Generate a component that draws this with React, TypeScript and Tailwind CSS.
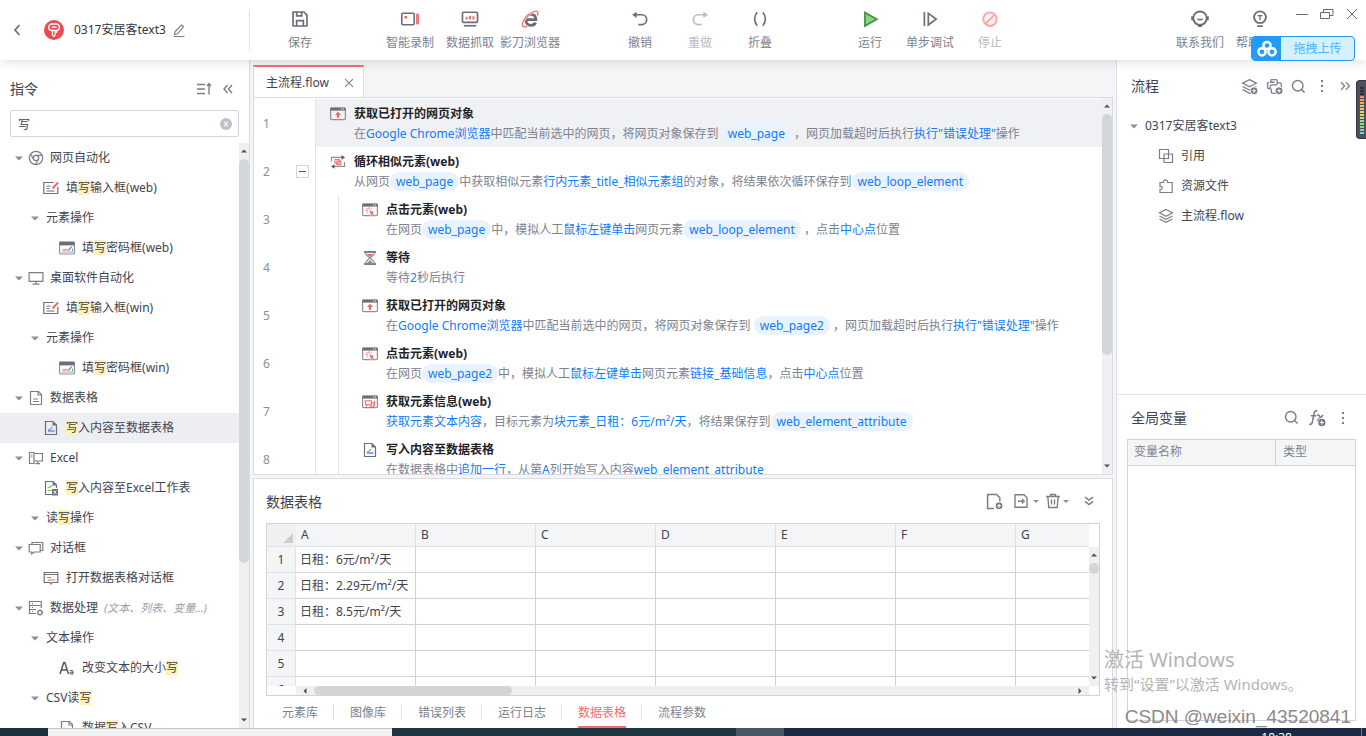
import { useState, type ReactNode } from "react";

type Part = string | { link: string } | { pill: string };

type Step = {
  icon: ReactNode;
  title: string;
  indent?: boolean;
  desc: Part[];
};

type TreeRow = {
  kind: "root" | "group" | "leaf" | "subleaf";
  label: string;
  icon?: ReactNode;
  note?: string;
};

/* ---------- icons ---------- */

function Icon({ children, size = 16, className = "" }: { children: ReactNode; size?: number; className?: string }) {
  return (
    <svg
      width={size}
      height={size}
      viewBox="0 0 16 16"
      fill="none"
      stroke="currentColor"
      strokeWidth="1.2"
      className={`shrink-0 ${className}`}
      aria-hidden="true"
    >
      {children}
    </svg>
  );
}

const windowFrame = (
  <>
    <rect x="0.6" y="2" width="14.8" height="11.6" rx="1" stroke="#8c8f99" />
    <path d="M0.5 1.6h15v3h-15z" fill="#6b6f7b" stroke="none" />
    <path d="M11 3h1M13 3h1" stroke="#fff" strokeWidth="1" />
  </>
);

const openPageIcon = (
  <Icon>
    {windowFrame}
    <path d="M8 5.8l3 3.2H9.2v2.8H6.8V9H5z" fill="#f56565" stroke="none" />
  </Icon>
);

const clickIcon = (
  <Icon>
    {windowFrame}
    <path d="M7 5.2v2M3.6 8.6h2M4.5 6.2l1.4 1.4M9.6 6.2L8.4 7.4M4.7 11.2l1.2-1.2" stroke="#f56565" strokeWidth="1" />
    <path d="M7.3 8l5.2 2.2-2 .8 2.3 2.3-1.2 1.2-2.2-2.3-.7 1.6z" fill="#f56565" stroke="#fff" strokeWidth="0.4" />
  </Icon>
);

const infoIcon = (
  <Icon>
    {windowFrame}
    <path d="M3.5 6.8h6v4h-6zM2.500 6.800h1M4.500 12.500v-2M9.500 9h2.500v3.800H8.500zM12.500 7v5" stroke="#f56565" strokeWidth="1" />
  </Icon>
);

const loopIcon = (
  <Icon>
    <path d="M1.500 7.500V3.400h11M14.500 8v4.400h-11" stroke="#8c8f99" />
    <path d="M11.500 1l3.600 2.400-3.600 2.300zM4.500 10.200L1 12.500l3.500 2.300z" fill="#55585f" stroke="none" />
    <rect x="5" y="5.400" width="4.200" height="3.600" stroke="#f56565" strokeWidth="1" />
    <rect x="6.800" y="7" width="4" height="3.600" stroke="#f56565" strokeWidth="1" />
  </Icon>
);

const waitIcon = (
  <Icon>
    <path d="M2 2h12M2 14h12" stroke="#55585f" strokeWidth="1.400" />
    <path d="M3.500 2.500c0 3 3 4 4.500 5.500 1.500-1.500 4.500-2.500 4.500-5.500M3.500 13.500c0-3 3-4 4.500-5.500 1.500 1.500 4.500 2.500 4.500 5.500" stroke="#8c8f99" />
    <path d="M4.800 4h6.400L8 7z" fill="#f56565" stroke="none" />
    <path d="M4.500 13.500L8 10l3.500 3.500z" fill="#8c8f99" stroke="none" />
  </Icon>
);

const sheetWriteIcon = (
  <Icon>
    <path d="M2.500 1.500h7.500l3.500 3.500v9.500h-11z" stroke="#6b6f7b" />
    <path d="M9.500 1.500v4h4z" fill="#6b6f7b" stroke="none" />
    <path d="M5 11h6.500" stroke="#7ea8f8" strokeWidth="2.200" />
    <path d="M4.800 10.200l1.500-.3 3-3" stroke="#6b6f7b" strokeWidth="1" />
  </Icon>
);

const inputIcon = (
  <Icon>
    <path d="M10.500 2.500H.8v11h14V7" stroke="#6b6f7b" />
    <path d="M3.500 6h4M3.500 8.500h3M3.500 11h8" stroke="#6b6f7b" strokeWidth="1" />
    <path d="M15 2.500L9.500 8.500" stroke="#f56565" strokeWidth="2" />
  </Icon>
);

const passwordIcon = (
  <Icon>
    <rect x="0.600" y="2" width="14.800" height="12" rx="1" stroke="#8c8f99" />
    <path d="M0.500 1.800h15v3.600h-15z" fill="#6b6f7b" stroke="none" />
    <path d="M2.500 12h11V8.500" stroke="#a3a5ad" strokeWidth="1" />
    <path d="M3.500 9.800h5" stroke="#f56565" strokeWidth="1.200" />
    <path d="M9.500 10.500l3-4" stroke="#6b6f7b" />
  </Icon>
);

const chromeIcon = (
  <Icon>
    <circle cx="8" cy="8" r="6.700" />
    <circle cx="8" cy="8" r="2.700" />
    <path d="M8 5.300h6M5.600 9.300L2.600 4.200M10.400 9.300l-3 5.200" />
  </Icon>
);

const monitorIcon = (
  <Icon>
    <path d="M1.100 2.600h13.800v8.800H1.100zM8 11.400V14M4.600 14.200h6.800" />
  </Icon>
);

const docIcon = (
  <Icon>
    <path d="M2.500 1.500h8l3 3v10h-11zM5 9h5M5 11.500h6" />
    <path d="M10 1.500V5h3.500" />
  </Icon>
);

const excelIcon = (
  <Icon>
    <path d="M6 13.500H1.500v-11H6zM6 3.500h8.500v7.500H6M9.800 11v2.500M7.500 13.700h4.500M3 5h1.500M3 7h1.500" />
  </Icon>
);

const excelWriteIcon = (
  <Icon>
    <path d="M13.500 8V5L10 1.500H2.500v13H9" stroke="#6b6f7b" />
    <path d="M9.500 1.500v4h4z" fill="#6b6f7b" stroke="none" />
    <path d="M4.500 8l1.500-.5 3-2M4.500 10.500h4" stroke="#67c23a" />
    <rect x="9" y="9" width="6" height="6.500" fill="#6b6f7b" stroke="none" />
    <path d="M10.600 10.600l2.800 3.300M13.400 10.600l-2.800 3.300" stroke="#fff" strokeWidth="1" />
  </Icon>
);

const dialogIcon = (
  <Icon>
    <path d="M1.200 4.500h11v7.500H6l-2.300 2v-2H1.200zM4 4.400V2.500h10.800v8h-2.400" />
  </Icon>
);

const tableDialogIcon = (
  <Icon>
    <path d="M1.200 2.500h13.600v10H9L8 14l-1-1.500H1.200zM1 4.500h14" stroke="#6b6f7b" />
    <path d="M4 7.500h4M5 10h7" stroke="#f56565" />
  </Icon>
);

const dataIcon = (
  <Icon>
    <path d="M8 13.500H1.500v-12h11.800V8M2 5.500h11M2 9.500h6M4 3.600h1M4 7.500h1M4 11.500h1" />
    <circle cx="12" cy="12.500" r="2.200" />
    <path d="M12 9.500v1M12 14.600v1M9 12.500h1M14 12.500h1.300M10 10.600l.6.500M13.500 14l.7.500M14.200 10.600l-.7.600M10.500 14l-.7.500" />
  </Icon>
);

const caseIcon = (
  <Icon>
    <path d="M1 14L4.800 2.500h1L9.500 14M2.500 10h5.500" stroke="#55585f" strokeWidth="1.500" />
    <path d="M11 10.500h2.200q.8 0 .8.900V14h-2q-1.200 0-1.200-.9t1.200-.9h2" stroke="#55585f" strokeWidth="1" />
  </Icon>
);

const layersPath = <path d="M8 1.500l6.500 3.300L8 8.200 1.500 4.800zM1.500 8L8 11.300 14.500 8M1.500 11L8 14.400l6.500-3.400" />;

const plusBadge = (
  <>
    <circle cx="12.300" cy="12" r="3.600" fill="#6b6f7b" stroke="#fff" strokeWidth="0.800" />
    <path d="M12.300 10v4M10.300 12h4" stroke="#fff" strokeWidth="1" />
  </>
);

const searchIcon = (
  <Icon size={15}>
    <circle cx="7.200" cy="7.200" r="5.600" strokeWidth="1.500" />
    <path d="M11.500 11.500l3 3" strokeWidth="1.600" />
  </Icon>
);

const moreIcon = (
  <Icon>
    <path d="M8 2v2M8 7v2M8 12v2" strokeWidth="2" />
  </Icon>
);

/* ---------- data ---------- */

const tree: TreeRow[] = [
  { kind: "root", label: "网页自动化", icon: chromeIcon },
  { kind: "leaf", label: "填写输入框(web)", icon: inputIcon },
  { kind: "group", label: "元素操作" },
  { kind: "subleaf", label: "填写密码框(web)", icon: passwordIcon },
  { kind: "root", label: "桌面软件自动化", icon: monitorIcon },
  { kind: "leaf", label: "填写输入框(win)", icon: inputIcon },
  { kind: "group", label: "元素操作" },
  { kind: "subleaf", label: "填写密码框(win)", icon: passwordIcon },
  { kind: "root", label: "数据表格", icon: docIcon },
  { kind: "leaf", label: "写入内容至数据表格", icon: sheetWriteIcon },
  { kind: "root", label: "Excel", icon: excelIcon },
  { kind: "leaf", label: "写入内容至Excel工作表", icon: excelWriteIcon },
  { kind: "group", label: "读写操作" },
  { kind: "root", label: "对话框", icon: dialogIcon },
  { kind: "leaf", label: "打开数据表格对话框", icon: tableDialogIcon },
  { kind: "root", label: "数据处理", icon: dataIcon, note: "(文本、列表、变量...)" },
  { kind: "group", label: "文本操作" },
  { kind: "subleaf", label: "改变文本的大小写", icon: caseIcon },
  { kind: "group", label: "CSV读写" },
  { kind: "subleaf", label: "数据写入CSV", icon: docIcon },
];

const steps: Step[] = [
  {
    icon: openPageIcon,
    title: "获取已打开的网页对象",
    desc: [
      "在", { link: "Google Chrome浏览器" }, "中匹配当前选中的网页，将网页对象保存到 ", { pill: "web_page" },
      " ，网页加载超时后执行", { link: "执行\"错误处理\"" }, "操作",
    ],
  },
  {
    icon: loopIcon,
    title: "循环相似元素(web)",
    desc: [
      "从网页", { pill: "web_page" }, "中获取相似元素", { link: "行内元素_title_相似元素组" },
      "的对象，将结果依次循环保存到", { pill: "web_loop_element" },
    ],
  },
  {
    icon: clickIcon,
    title: "点击元素(web)",
    indent: true,
    desc: [
      "在网页", { pill: "web_page" }, "中，模拟人工", { link: "鼠标左键单击" }, "网页元素",
      { pill: "web_loop_element" }, " ，点击", { link: "中心点" }, "位置",
    ],
  },
  {
    icon: waitIcon,
    title: "等待",
    indent: true,
    desc: ["等待", { link: "2" }, "秒后执行"],
  },
  {
    icon: openPageIcon,
    title: "获取已打开的网页对象",
    indent: true,
    desc: [
      "在", { link: "Google Chrome浏览器" }, "中匹配当前选中的网页，将网页对象保存到 ", { pill: "web_page2" },
      " ，网页加载超时后执行", { link: "执行\"错误处理\"" }, "操作",
    ],
  },
  {
    icon: clickIcon,
    title: "点击元素(web)",
    indent: true,
    desc: [
      "在网页", { pill: "web_page2" }, "中，模拟人工", { link: "鼠标左键单击" }, "网页元素",
      { link: "链接_基础信息" }, "，点击", { link: "中心点" }, "位置",
    ],
  },
  {
    icon: infoIcon,
    title: "获取元素信息(web)",
    indent: true,
    desc: [
      { link: "获取元素文本内容" }, "，目标元素为", { link: "块元素_日租：6元/m²/天" }, "，将结果保存到",
      { pill: "web_element_attribute" },
    ],
  },
  {
    icon: sheetWriteIcon,
    title: "写入内容至数据表格",
    indent: true,
    desc: [
      "在数据表格中", { link: "追加一行" }, "，从第", { link: "A" }, "列开始写入内容", { link: "web_element_attribute" },
    ],
  },
];

const columns = ["A", "B", "C", "D", "E", "F", "G"];
const cells = ["日租：6元/m²/天", "日租：2.29元/m²/天", "日租：8.5元/m²/天", "", "", ""];
const bottomTabs = ["元素库", "图像库", "错误列表", "运行日志", "数据表格", "流程参数"];

/* ---------- small parts ---------- */

function Caret({ className = "" }: { className?: string }) {
  return (
    <svg width="8" height="5" viewBox="0 0 8 5" className={`shrink-0 ${className}`} aria-hidden="true">
      <path d="M0 0.500h8L4 4.500z" fill="#8c8f99" />
    </svg>
  );
}

function ScrollArrow({ dir }: { dir: "up" | "down" | "left" | "right" }) {
  const d = {
    up: "M2 6.500h6L5 3.500z",
    down: "M2 3.500h6L5 6.500z",
    left: "M6.500 2v6L3.500 5z",
    right: "M3.500 2v6L6.500 5z",
  }[dir];
  return (
    <svg width="10" height="10" viewBox="0 0 10 10" className="shrink-0" aria-hidden="true">
      <path d={d} fill="#505050" />
    </svg>
  );
}

function VScroll({ thumb }: { thumb: string }) {
  return (
    <div className="flex w-[10px] shrink-0 flex-col items-center justify-between bg-[#f0f0f0] py-[3px]">
      <ScrollArrow dir="up" />
      <div className="min-h-0 w-full flex-1 py-[3px]">
        <div className={`w-full rounded-full bg-[#d2d6d9] ${thumb}`} />
      </div>
      <ScrollArrow dir="down" />
    </div>
  );
}

function ToolButton({ label, children, disabled }: { label: string; children: ReactNode; disabled?: boolean }) {
  return (
    <button
      disabled={disabled}
      className={`flex w-[60px] flex-col items-center gap-[5px] whitespace-nowrap pt-[3px] leading-[20px] ${
        disabled ? "text-[#b9bbc1]" : "text-[#7c828e]"
      }`}
    >
      {children}
      {label}
    </button>
  );
}

function IconButton({ label, children }: { label: string; children: ReactNode }) {
  return (
    <button aria-label={label} className="flex items-center text-[#7b7e89]">
      {children}
    </button>
  );
}

function Highlighted({ text, query }: { text: string; query: string }) {
  if (!query) return <>{text}</>;
  return (
    <>
      {text.split(query).map((piece, i) => (
        <span key={i}>
          {i > 0 && <mark className="inline-block bg-[#fff1b8] leading-[15px] text-inherit">{query}</mark>}
          {piece}
        </span>
      ))}
    </>
  );
}

function StepDesc({ parts }: { parts: Part[] }) {
  return (
    <p className="whitespace-pre leading-[20px] text-[#7c828e]">
      {parts.map((p, i) => {
        if (typeof p === "string") return <span key={i}>{p}</span>;
        if ("link" in p) return <span key={i} className="text-[#0f7bff]">{p.link}</span>;
        return (
          <span key={i} className="inline-block rounded-full bg-[#e9f2ff] px-[6px] leading-[19px] text-[#0f7bff]">
            {p.pill}
          </span>
        );
      })}
    </p>
  );
}

/* ---------- sections ---------- */

function Header() {
  return (
    <header className="relative z-10 flex h-[60px] shrink-0 items-center bg-white shadow-[0_2px_10px_rgba(0,0,0,0.12)]">
      <div className="flex h-10 w-[250px] shrink-0 items-center border-r border-[#dfe1e6] pl-[10px]">
        <button aria-label="返回" className="text-[#6b6f7b]">
          <Icon><path d="M9.500 3L5 8l4.500 5" strokeWidth="1.800" /></Icon>
        </button>
        <svg width="20" height="20" viewBox="0 0 20 20" fill="none" className="ml-[18px]" aria-hidden="true">
          <circle cx="10" cy="10" r="10" fill="#ec4b4f" />
          <rect x="4.700" y="4" width="10.600" height="6.500" rx="3" stroke="#fff" strokeWidth="1.300" />
          <path d="M7.500 7.200h5" stroke="#fff" strokeWidth="1.500" />
          <path d="M8.500 10.500v4.500l1.500 1.500 1.200-1.500v-4.500M12.800 11v2" stroke="#fff" strokeWidth="1.200" />
        </svg>
        <span className="ml-[10px] text-[#33363f]">0317安居客text3</span>
        <button aria-label="重命名" className="ml-[5px] text-[#7b7e89]">
          <Icon><path d="M10.500 3l2 1.800-6 7-3 .7.600-3zM2.500 14.500h11" strokeWidth="1.100" /></Icon>
        </button>
      </div>
      <div className="flex flex-1 items-center pl-[20px]">
        <ToolButton label="保存">
          <Icon size={18}>
            <path d="M1.800 1.800h9.700l2.700 2.700v9.700H1.800zM5 14v-4.500h6V14M5 2v3.300h4.500V2" stroke="#6b6f7b" strokeWidth="1.500" />
          </Icon>
        </ToolButton>
        <div className="ml-[50px] flex">
          <ToolButton label="智能录制">
            <svg width="20" height="18" viewBox="0 0 20 18" fill="none" aria-hidden="true">
              <rect x="1.800" y="3.300" width="12.400" height="11.400" rx="1" stroke="#6b6f7b" strokeWidth="1.600" />
              <rect x="4.500" y="6" width="2.500" height="2.500" fill="#f56565" />
              <rect x="16" y="3.500" width="3" height="11" rx="1" fill="#f97474" />
            </svg>
          </ToolButton>
          <ToolButton label="数据抓取">
            <Icon size={18}>
              <rect x="1.300" y="2" width="13.400" height="9" rx="1" stroke="#6b6f7b" strokeWidth="1.500" />
              <path d="M2.500 14h11" stroke="#6b6f7b" strokeWidth="1.500" />
              <path d="M5 6v2.500M8 5v3.500M11 5.500v3" stroke="#f56565" strokeWidth="1.700" />
            </Icon>
          </ToolButton>
          <ToolButton label="影刀浏览器">
            <Icon size={18}>
              <path d="M4.500 8.600h8.700c0-3.200-1.600-4.700-4.200-4.700S4.400 5.900 4.400 8.900c0 2.900 1.800 4.700 4.500 4.700 2 0 3.400-.7 4.100-2.400" stroke="#6b6f7b" strokeWidth="2.500" />
              <path d="M14.500 5c1-2.400.6-4-.9-4C10 1 4 6 1.800 10.700c-1 2.500-.6 4.500 1 4.500 1 0 2-.6 3-1.300" stroke="#fff" strokeWidth="2" />
              <path d="M14.500 5c1-2.400.6-4-.9-4C10 1 4 6 1.800 10.700c-1 2.500-.6 4.500 1 4.500 1 0 2-.6 3-1.300" stroke="#f97474" strokeWidth="1.300" />
            </Icon>
          </ToolButton>
        </div>
        <div className="ml-[50px] flex">
          <ToolButton label="撤销">
            <Icon size={18}>
              <path d="M3 4.200h6.500a4.400 4.400 0 010 8.800H6.500" stroke="#6b6f7b" strokeWidth="1.500" />
              <path d="M5 1.500L1 4.200 5 7z" fill="#6b6f7b" stroke="none" />
            </Icon>
          </ToolButton>
          <ToolButton label="重做" disabled>
            <Icon size={18}>
              <path d="M13 4.200H6.500a4.400 4.400 0 000 8.800h3" strokeWidth="1.500" />
              <path d="M11 1.500l4 2.700L11 7z" fill="currentColor" stroke="none" />
            </Icon>
          </ToolButton>
          <ToolButton label="折叠">
            <Icon size={18}>
              <path d="M5.500 2C2.500 5.500 2.500 10.500 5.500 14M10.500 2c3 3.500 3 8.500 0 12" stroke="#6b6f7b" strokeWidth="1.500" />
            </Icon>
          </ToolButton>
        </div>
        <div className="ml-[50px] flex">
          <ToolButton label="运行">
            <Icon size={18}>
              <path d="M3.500 2.200l10.500 6-10.500 6z" fill="#8bd67f" stroke="#3f8f46" strokeWidth="1.500" />
            </Icon>
          </ToolButton>
          <ToolButton label="单步调试">
            <Icon size={18}>
              <path d="M3 1.800v12.500M6.500 3l7 5-7 5.300z" stroke="#6b6f7b" strokeWidth="1.500" />
            </Icon>
          </ToolButton>
          <ToolButton label="停止" disabled>
            <Icon size={18}>
              <circle cx="8" cy="8.200" r="6" fill="#fff0f0" stroke="#ffa3a3" strokeWidth="1.600" />
              <path d="M4 12.200l8-8" stroke="#ffa3a3" strokeWidth="1.600" />
            </Icon>
          </ToolButton>
        </div>
        <div className="ml-auto mr-[76px] flex">
          <ToolButton label="联系我们">
            <Icon size={18}>
              <circle cx="8" cy="7.300" r="6" stroke="#6b6f7b" strokeWidth="1.700" />
              <path d="M1 5.500v3.600M15 5.500v3.600M6.300 14.200h3.400" stroke="#6b6f7b" strokeWidth="1.600" />
              <path d="M5.800 7.800c1 1.300 3.400 1.300 4.400 0" stroke="#6b6f7b" />
            </Icon>
          </ToolButton>
          <ToolButton label="帮助中心">
            <Icon size={18}>
              <path d="M6 11.500C3.500 10 2.700 8.500 2.700 6.500a5.300 5.300 0 0110.600 0c0 2-.8 3.500-3.300 5zM5.500 14.300h5" stroke="#6b6f7b" strokeWidth="1.600" />
              <path d="M5.800 5h4.400M8 5v4" stroke="#6b6f7b" strokeWidth="1.200" />
            </Icon>
          </ToolButton>
        </div>
      </div>

      {/* window controls */}
      <div className="absolute right-[6px] top-[6px] flex items-center gap-[9px] text-[#6b6b6b]">
        <button aria-label="最小化"><Icon><path d="M2 8.500h12" strokeWidth="1" /></Icon></button>
        <button aria-label="还原"><Icon><path d="M1.500 6.500h9v6h-9zM4.500 6.500v-3h9.500v6h-3.500" strokeWidth="1" /></Icon></button>
        <button aria-label="关闭"><Icon><path d="M3 3l10 10M13 3L3 13" strokeWidth="1" /></Icon></button>
      </div>

      {/* cloud drive drop target */}
      <button className="absolute right-[11px] top-[36px] flex h-[25px] w-[104px] items-center overflow-hidden rounded-[4px] border border-[#2196f3] bg-[#d4f1ff] text-[#4db2f7]">
        <span className="flex h-full w-[29px] items-center justify-center bg-[#219cf9]">
          <svg width="20" height="18" viewBox="0 0 20 18" fill="none" stroke="#fff" strokeWidth="2.500" aria-hidden="true">
            <circle cx="10" cy="5.500" r="3.600" />
            <circle cx="5" cy="11.800" r="3.600" />
            <circle cx="15" cy="11.800" r="3.600" />
          </svg>
        </span>
        <span className="flex-1">拖拽上传</span>
      </button>
    </header>
  );
}

function CommandPanel() {
  const [query, setQuery] = useState("写");
  const [active, setActive] = useState(9);

  const pad = {
    root: "pl-[15px]",
    group: "pl-[31px]",
    leaf: "pl-[43px]",
    subleaf: "pl-[59px]",
  };

  return (
    <aside className="flex w-[250px] shrink-0 flex-col border-r border-[#d9dce3] bg-white">
      <div className="flex items-center pl-[10px] pr-[13px] pt-[18px]">
        <h2 className="flex-1 text-[14px] leading-[22px]">指令</h2>
        <div className="flex items-center gap-[8px]">
          <IconButton label="排序">
            <Icon><path d="M1 3.500h8M1 8h8M1 12.500h8M13 13.500V3M11 5l2-2.500L15 5" strokeWidth="1.400" /></Icon>
          </IconButton>
          <IconButton label="收起">
            <Icon><path d="M7.500 4L4 8l3.500 4M12 4L8.500 8l3.500 4" strokeWidth="1.400" /></Icon>
          </IconButton>
        </div>
      </div>
      <div className="mx-[10px] mt-[10px] flex h-[27px] items-center rounded-[2px] border border-[#d3d5da] pl-[7px] pr-[6px]">
        <input
          aria-label="搜索指令"
          value={query}
          onChange={(e) => setQuery(e.target.value)}
          className="h-full min-w-0 flex-1 outline-none"
        />
        <button aria-label="清空" onClick={() => setQuery("")}>
          <svg width="12" height="12" viewBox="0 0 12 12" aria-hidden="true">
            <circle cx="6" cy="6" r="6" fill="#bfc1ca" />
            <path d="M4 3.500l4 5M8 3.500l-4 5" stroke="#fff" strokeWidth="1.200" />
          </svg>
        </button>
      </div>
      <div className="mt-[6px] flex min-h-0 flex-1">
        <div className="min-w-0 flex-1 overflow-hidden">
          {tree.map((row, i) => (
            <button
              key={i}
              onClick={() => setActive(i)}
              className={`flex h-[30px] w-full items-center whitespace-nowrap text-left ${pad[row.kind]} ${
                active === i ? "bg-[#edeef2]" : ""
              }`}
            >
              {(row.kind === "root" || row.kind === "group") && <Caret className="mr-[5px]" />}
              {row.icon && (
                <span className={`text-[#7b7e89] ${row.kind === "root" ? "mr-[6px]" : "mr-[7px]"}`}>{row.icon}</span>
              )}
              <span className={row.kind === "group" ? "pl-[2px]" : ""}>
                <Highlighted text={row.label} query={query} />
              </span>
              {row.note && <em className="ml-[6px] text-[11px] text-[#9a9da6]">{row.note}</em>}
            </button>
          ))}
        </div>
        <VScroll thumb="h-[73%]" />
      </div>
    </aside>
  );
}

function FlowEditor() {
  const [selected, setSelected] = useState(0);
  return (
    <section className="flex min-h-0 flex-1 flex-col">
      <div className="flex shrink-0">
        <div className="-mb-[1px] flex h-[33px] items-center gap-[13px] border-x border-t-2 border-x-[#d9dce3] border-t-[#f56c6c] bg-white pl-[12px] pr-[7px]">
          <button>主流程.flow</button>
          <button aria-label="关闭标签" className="text-[#7b7e89]">
            <Icon size={14}><path d="M3.500 3.500l9 9M12.500 3.500l-9 9" /></Icon>
          </button>
        </div>
      </div>
      <div className="flex min-h-0 flex-1 border border-[#d9dce3] bg-white">
        <ol className="min-w-0 flex-1 overflow-hidden pt-[1px]">
          {steps.map((step, i) => (
            <li key={i} className="flex h-[48px]" onClick={() => setSelected(i)}>
              <div className="flex w-[62px] shrink-0 items-center justify-between border-r border-[#e3e4e8] pl-[9px] pr-[6px] pt-[2px] text-[#8b8f99]">
                {i + 1}
                {i === 1 && (
                  <button aria-label="折叠循环" className="-mt-[2px] flex h-[13px] w-[13px] items-center justify-center border border-[#d3d5da]">
                    <span className="h-[1px] w-[7px] bg-[#55585f]" />
                  </button>
                )}
              </div>
              {step.indent && <div className="ml-[22px] mr-[9px] w-[1px] shrink-0 bg-[#e3e4e8]" />}
              <div
                className={`flex min-w-0 flex-1 gap-[8px] overflow-hidden pl-[14px] pt-[5px] ${
                  selected === i ? "bg-[#f0f1f5]" : ""
                }`}
              >
                <span className="pt-[2px]">{step.icon}</span>
                <div>
                  <h3 className="font-bold leading-[20px] text-[#1f2329]">{step.title}</h3>
                  <StepDesc parts={step.desc} />
                </div>
              </div>
            </li>
          ))}
        </ol>
        <VScroll thumb="h-[70%]" />
      </div>
    </section>
  );
}

function DataPanel() {
  const [tab, setTab] = useState("数据表格");
  return (
    <section className="mt-[3px] flex h-[250px] shrink-0 flex-col border border-b-0 border-[#d9dce3] bg-white px-[12px]">
      <div className="flex h-[44px] shrink-0 items-center">
        <h2 className="flex-1 text-[14px]">数据表格</h2>
        <div className="flex items-center pr-[4px]">
          <IconButton label="新增">
            <Icon size={17}><path d="M7.500 14.500h-6v-13h8.500l3 3V8" strokeWidth="1.400" />{plusBadge}</Icon>
          </IconButton>
          <span className="w-[10px]" />
          <IconButton label="导出">
            <Icon><path d="M2 1.800h9l3 3v9.400H2zM5 8.200h5M9 6l2.200 2.200L9 10.400" strokeWidth="1.400" /></Icon>
            <Caret className="ml-[3px] scale-75" />
          </IconButton>
          <span className="w-[5px]" />
          <IconButton label="清空表格">
            <Icon><path d="M1 3.500h14M5.500 3V1.500h5V3M2.800 3.500l1 11h8.400l1-11M6.500 6.500v5M9.500 6.500v5" strokeWidth="1.400" /></Icon>
            <Caret className="ml-[1px] scale-75" />
          </IconButton>
          <span className="w-[12px]" />
          <IconButton label="收起面板">
            <Icon size={14}><path d="M3.500 3.500L8 7l4.500-3.500M3.500 8.500L8 12l4.500-3.500" strokeWidth="1.700" /></Icon>
          </IconButton>
        </div>
      </div>
      <div className="flex min-h-0 flex-1 flex-col border border-[#d0d3d9]">
        <div className="flex min-h-0 flex-1">
          <div className="min-w-0 flex-1 overflow-hidden">
            <table className="w-[869px] table-fixed border-separate border-spacing-0">
              <thead>
                <tr className="h-[23px] bg-[#f4f5f7] text-left">
                  <th className="w-[29px] border-b border-[#e0e1e4] bg-[#f0f0f0]">
                    <svg width="10" height="10" viewBox="0 0 10 10" className="ml-[16px] mt-[5px]" aria-hidden="true">
                      <path d="M10 0v10H0z" fill="#ccc" />
                    </svg>
                  </th>
                  {columns.map((c) => (
                    <th key={c} className="w-[120px] border-b border-r border-[#e0e1e4] pl-[5px] font-normal leading-[18px]">
                      {c}
                    </th>
                  ))}
                </tr>
              </thead>
              <tbody>
                {cells.map((value, i) => (
                  <tr key={i} className="h-[26px]">
                    <th className="border-b border-r border-[#e0e1e4] bg-[#f4f5f7] font-normal">{i + 1}</th>
                    {columns.map((c) => (
                      <td key={c} className="whitespace-nowrap border-b border-r border-[#d0d1d6] pl-[4px] leading-[20px]">
                        {c === "A" ? value : ""}
                      </td>
                    ))}
                  </tr>
                ))}
              </tbody>
            </table>
          </div>
          <div className="flex shrink-0 pt-[23px]">
            <VScroll thumb="h-[11px]" />
          </div>
        </div>
        <div className="flex h-[9px] shrink-0 pl-[29px] pr-[10px]">
          <div className="flex flex-1 items-center bg-[#f0f0f0] px-[4px]">
            <ScrollArrow dir="left" />
            <div className="h-full flex-1 pl-[4px]">
              <div className="h-full w-[26%] rounded-full bg-[#d2d6d9]" />
            </div>
            <ScrollArrow dir="right" />
          </div>
        </div>
      </div>
      <nav className="flex h-[32px] shrink-0 items-center divide-x divide-[#dfe1e6]">
        {bottomTabs.map((t) => (
          <div key={t} className="flex h-[16px] items-center pl-[16px] pr-[15px]">
            <button
              onClick={() => setTab(t)}
              className={`h-[32px] border-b-2 pt-[4px] ${
                tab === t ? "border-b-[#f56c6c] text-[#f56c6c]" : "border-b-transparent text-[#7c828e]"
              }`}
            >
              {t}
            </button>
          </div>
        ))}
      </nav>
    </section>
  );
}

const flowFiles = [
  { label: "引用", icon: <Icon><path d="M1.500 1.500h9v9h-9zM6 6h8.500v8.500H6z" /></Icon> },
  {
    label: "资源文件",
    icon: <Icon><path d="M2 4.500h3.500c-.8-3.500 4.800-3.500 4 0h4.700v10H2v-3.300c2.800.6 2.800-3.600 0-3z" /></Icon>,
  },
  { label: "主流程.flow", icon: <Icon>{layersPath}</Icon> },
];

function RightPanel() {
  return (
    <aside className="flex w-[250px] shrink-0 flex-col border-l border-[#d9dce3] bg-white">
      <section className="h-[335px] shrink-0 border-b border-[#e3e4e8]">
        <div className="flex items-center pl-[14px] pr-[14px] pt-[15px]">
          <h2 className="flex-1 text-[14px] leading-[22px]">流程</h2>
          <div className="flex items-center gap-[8px]">
            <IconButton label="新建流程"><Icon size={17}>{layersPath}{plusBadge}</Icon></IconButton>
            <IconButton label="新建Python模块">
              <Icon size={17}>
                <path d="M8 4H4.500V2.500q0-1 1-1h4q1 0 1 1v3q0 1-1 1h-4q-1.500 0-1.500 1.500v2H2.500q-1 0-1-1V5.500q0-1.500 1.500-1.500M10.500 4.500H13q1.500 0 1.500 1.500v3M5 10v3q0 1.500 1.500 1.500H9" />
                {plusBadge}
              </Icon>
            </IconButton>
            <IconButton label="搜索流程">{searchIcon}</IconButton>
            <IconButton label="更多">{moreIcon}</IconButton>
            <IconButton label="收起">
              <Icon size={14}><path d="M3.500 3.500L7.500 8l-4 4.500M9 3.500L13 8l-4 4.500" strokeWidth="1.500" /></Icon>
            </IconButton>
          </div>
        </div>
        <div className="pt-[14px]">
          <button className="flex h-[30px] items-center gap-[7px] pl-[13px]">
            <Caret />
            0317安居客text3
          </button>
          {flowFiles.map((f) => (
            <button key={f.label} className="flex h-[30px] items-center gap-[7px] pl-[41px]">
              <span className="text-[#7b7e89]">{f.icon}</span>
              {f.label}
            </button>
          ))}
        </div>
      </section>
      <section className="flex min-h-0 flex-1 flex-col pb-[7px] pl-[10px] pr-[10px]">
        <div className="flex h-[44px] shrink-0 items-center pl-[4px] pr-[5px] pt-[1px]">
          <h2 className="flex-1 text-[14px]">全局变量</h2>
          <div className="flex items-center gap-[9px]">
            <IconButton label="搜索变量">{searchIcon}</IconButton>
            <IconButton label="新建变量">
              <Icon size={18}>
                <path d="M1 13.500c2 .5 2.600-.5 3-2.500L5.400 4c.4-2 1.200-2.700 3-2.200M2.500 6h5M8 5.500c1.500-.5 2 0 2.500 1.500l1 3M13.500 5.500L8 10.500" strokeWidth="1.400" />
                {plusBadge}
              </Icon>
            </IconButton>
            <IconButton label="更多">{moreIcon}</IconButton>
          </div>
        </div>
        <div className="flex-1 border border-[#d0d3d9]">
          <table className="w-full table-fixed">
            <thead>
              <tr className="h-[25px] border-b border-[#d0d3d9] bg-[#f4f5f7] text-left text-[#7c828e]">
                <th className="w-[65%] border-r border-[#d0d3d9] pl-[6px] font-normal">变量名称</th>
                <th className="pl-[7px] font-normal">类型</th>
              </tr>
            </thead>
            <tbody />
          </table>
        </div>
      </section>
    </aside>
  );
}

const meterColors = [
  "bg-[#2f323d]", "bg-[#2f323d]", "bg-[#2f323d]",
  "bg-[#f08a6c]", "bg-[#f0986c]", "bg-[#f0a86c]", "bg-[#efc06a]", "bg-[#eccb68]", "bg-[#e6d66a]",
  "bg-[#d8dd6c]", "bg-[#c3df70]", "bg-[#a9dd78]", "bg-[#8fdb84]", "bg-[#7ddb98]", "bg-[#74dbae]", "bg-[#70dbc4]",
];

export default function App() {
  return (
    <main className="relative flex h-screen w-full flex-col overflow-hidden bg-[#f4f5f7] font-['Noto_Sans','Noto_Sans_CJK_SC',sans-serif] text-[12px] text-[#3f444e]">
      <Header />
      <div className="flex min-h-0 flex-1">
        <CommandPanel />
        <div className="flex min-w-0 flex-1 flex-col px-[3px] pt-[5px]">
          <FlowEditor />
          <DataPanel />
        </div>
        <RightPanel />
      </div>

      {/* desktop taskbar */}
      <footer className="flex h-[8px] shrink-0 overflow-hidden bg-[#1b2a42] text-white">
        <div className="w-[48px] bg-[#1d333c]" />
        <div className="w-[344px] border-t border-[#c4c6c6] bg-[#f2f2f2]" />
        <div className="w-[344px] bg-[#1f3743]" />
        <div className="w-[48px] bg-[#465866]" />
        <div className="ml-auto mr-[69px] pt-[1px]">18:38</div>
        <div className="mr-[4px] w-[1px] bg-[#6b7688]" />
      </footer>

      {/* level meter stuck to the screen edge */}
      <div className="absolute right-0 top-[80px] z-20 flex h-[59px] w-[10px] flex-col gap-[1px] rounded-l-[4px] border border-r-0 border-[#33363f] bg-[#4d505d] pl-[3px] pr-[2px] pt-[6px]">
        {meterColors.map((c, i) => (
          <div key={i} className={`h-[2px] ${c}`} />
        ))}
      </div>

      {/* watermarks */}
      <div className="pointer-events-none absolute bottom-[41px] right-[61px] z-20 w-[201px] whitespace-nowrap text-[#b4b4b4]">
        <p className="text-[20px] leading-[26px]">激活 Windows</p>
        <p className="text-[15px] leading-[22px]">转到“设置”以激活 Windows。</p>
      </div>
      <p className="pointer-events-none absolute bottom-[7px] right-[15px] z-20 whitespace-nowrap font-['Liberation_Sans',sans-serif] text-[19px] leading-[24px] text-[#8a8a8a]">
        CSDN @weixin_43520841
      </p>
    </main>
  );
}
